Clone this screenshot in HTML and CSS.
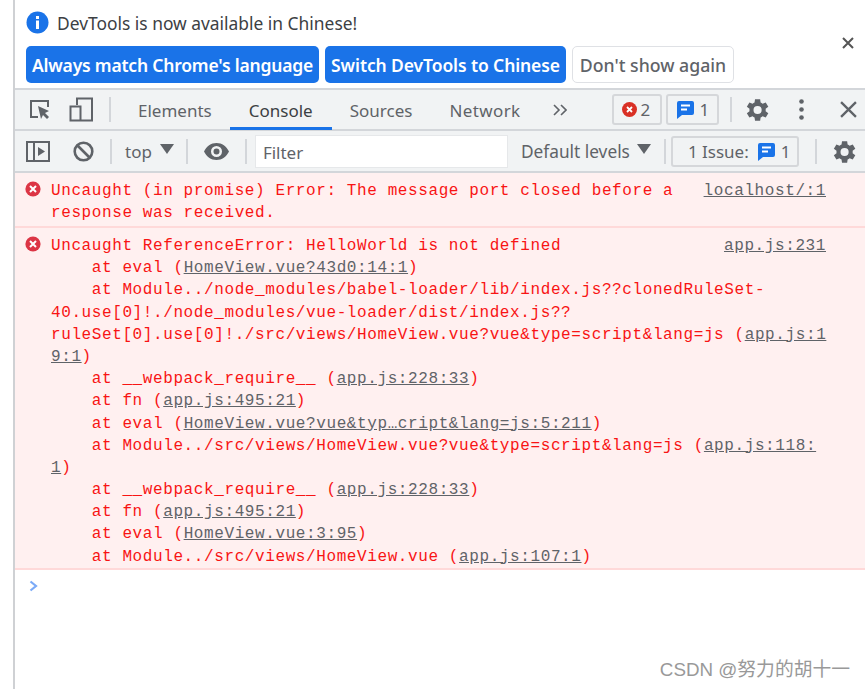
FILE: index.html
```html
<!DOCTYPE html>
<html lang="en">
<head>
<meta charset="utf-8">
<title>DevTools</title>
<link rel="stylesheet" href="styles.css">
</head>
<body>
<div class="devtools">
  <section class="infobar">
    <div class="info-head">
      <svg class="info-icon" width="23" height="23" viewBox="0 0 23 23"><circle cx="11.5" cy="11.5" r="11" fill="#1a73e8"/><rect x="10" y="5" width="3" height="3" fill="#fff"/><rect x="10" y="9.5" width="3" height="8.5" fill="#fff"/></svg>
      <span>DevTools is now available in Chinese!</span>
    </div>
    <div class="info-actions">
      <button class="btn primary wide">Always match Chrome's language</button>
      <button class="btn primary">Switch DevTools to Chinese</button>
      <button class="btn plain">Don't show again</button>
    </div>
    <svg class="info-close" width="12" height="12" viewBox="0 0 12 12"><path d="M1 1l10 10M11 1L1 11" stroke="#555" stroke-width="2"/></svg>
  </section>

  <nav class="tabbar">
    <svg class="ic inspect" width="23" height="23" viewBox="0 0 23 23"><path d="M9 19H2V3h17v6" fill="none" stroke="#5f6368" stroke-width="2"/><path d="M9 8l11 5-4 2 4 4-2 2-4-4-2 4z" fill="#5f6368"/></svg>
    <svg class="ic device" width="24" height="25" viewBox="0 0 24 25"><path d="M8 8V1.500h15v22H1.500V9.500h10v14" fill="none" stroke="#5f6368" stroke-width="2"/></svg>
    <i class="sep first"></i>
    <a class="tab t1">Elements</a>
    <a class="tab active">Console</a>
    <a class="tab t3">Sources</a>
    <a class="tab t4">Network</a>
    <svg class="ic more" width="14" height="12" viewBox="0 0 14 12"><path d="M1 1l5 5-5 5M8 1l5 5-5 5" fill="none" stroke="#5f6368" stroke-width="1.600"/></svg>
    <span class="counter c1">
      <svg width="15" height="15" viewBox="0 0 15 15"><circle cx="7.500" cy="7.500" r="7.500" fill="#d93025"/><path d="M5 5l5 5M10 5l-5 5" stroke="#fff" stroke-width="1.800"/></svg>2
    </span>
    <span class="counter c2">
      <svg width="17" height="18" viewBox="0 0 17 18"><path d="M2 0h13a2 2 0 0 1 2 2v10a2 2 0 0 1-2 2H5l-5 4V2a2 2 0 0 1 2-2z" fill="#1a73e8"/><path d="M4 4.500h9M4 8.500h6" stroke="#fff" stroke-width="1.800"/></svg>1
    </span>
    <i class="sep after-counters"></i>
    <svg class="ic gear g1" width="28" height="28" viewBox="0 0 24 24"><path fill="#5f6368" fill-rule="evenodd" d="M19.400 13a7.600 7.600 0 0 0 0-2l2.300-1.700-2.200-3.800-2.700 1.100a7.500 7.500 0 0 0-1.700-1L14.700 2.700h-4.400L9.900 5.600a7.500 7.500 0 0 0-1.700 1L5.500 5.500 3.300 9.300 5.600 11a7.600 7.600 0 0 0 0 2l-2.300 1.700 2.200 3.800 2.700-1.100c.5.400 1.100.8 1.700 1l.4 2.900h4.400l.4-2.900c.6-.2 1.200-.6 1.700-1l2.700 1.100 2.200-3.800zM12.500 15.500a3.500 3.500 0 1 1 0-7 3.500 3.500 0 0 1 0 7z"/></svg>
    <svg class="ic dots" width="5" height="21" viewBox="0 0 5 21"><circle cx="2.500" cy="2.500" r="2.300" fill="#5f6368"/><circle cx="2.500" cy="10.500" r="2.300" fill="#5f6368"/><circle cx="2.500" cy="18.500" r="2.300" fill="#5f6368"/></svg>
    <svg class="ic x" width="17" height="17" viewBox="0 0 16 16"><path d="M1 1l14 14M15 1L1 15" stroke="#5f6368" stroke-width="2.200"/></svg>
  </nav>

  <div class="toolbar">
    <svg class="ic sidebar" width="24" height="21" viewBox="0 0 24 21"><path d="M1 1h22v19H1zM8 1v19" fill="none" stroke="#5f6368" stroke-width="2"/><path d="M12 6l7 4.500-7 4.500z" fill="#5f6368"/></svg>
    <svg class="ic clear" width="21" height="21" viewBox="0 0 21 21"><circle cx="10.500" cy="10.500" r="8.800" fill="none" stroke="#5f6368" stroke-width="2.600"/><path d="M4.500 4.500l12 12" stroke="#5f6368" stroke-width="2.600"/></svg>
    <i class="sep s2"></i>
    <span class="ctx">top</span><span class="tri t-top"></span>
    <i class="sep s3"></i>
    <svg class="ic eye" width="25" height="17" viewBox="0 0 25 17"><path fill="#5f6368" fill-rule="evenodd" d="M12.500 0C7 0 2.500 3.400 0 8.500 2.500 13.600 7 17 12.500 17S22.500 13.600 25 8.500C22.500 3.400 18 0 12.500 0zm0 14a5.500 5.500 0 1 1 0-11 5.500 5.500 0 0 1 0 11zm0-8.500a3 3 0 1 0 0 6 3 3 0 0 0 0-6z"/></svg>
    <i class="sep s4"></i>
    <div class="filter">Filter</div>
    <span class="levels">Default levels</span><span class="tri t-lv"></span>
    <i class="sep s5"></i>
    <span class="counter issues"><span>1 Issue:</span>
      <svg width="17" height="18" viewBox="0 0 17 18"><path d="M2 0h13a2 2 0 0 1 2 2v10a2 2 0 0 1-2 2H5l-5 4V2a2 2 0 0 1 2-2z" fill="#1a73e8"/><path d="M4 4.500h9M4 8.500h6" stroke="#fff" stroke-width="1.800"/></svg><span>1</span>
    </span>
    <i class="sep s6"></i>
    <svg class="ic gear g2" width="28" height="28" viewBox="0 0 24 24"><path fill="#5f6368" fill-rule="evenodd" d="M19.400 13a7.600 7.600 0 0 0 0-2l2.300-1.700-2.200-3.800-2.700 1.100a7.500 7.500 0 0 0-1.700-1L14.700 2.700h-4.400L9.900 5.600a7.500 7.500 0 0 0-1.700 1L5.500 5.500 3.300 9.300 5.600 11a7.600 7.600 0 0 0 0 2l-2.300 1.700 2.200 3.800 2.700-1.100c.5.400 1.100.8 1.700 1l.4 2.900h4.400l.4-2.900c.6-.2 1.200-.6 1.700-1l2.700 1.100 2.200-3.800zM12.500 15.500a3.500 3.500 0 1 1 0-7 3.500 3.500 0 0 1 0 7z"/></svg>
  </div>

  <main class="console">
    <article class="msg m1">
      <svg class="err" width="16" height="16" viewBox="0 0 16 16"><circle cx="8" cy="8" r="7.600" fill="#dc3545"/><path d="M5 5l6 6M11 5l-6 6" stroke="#fff" stroke-width="2"/></svg>
      <div class="text">
        <div class="line head"><span>Uncaught (in promise) Error: The message port closed before a</span><a class="src">localhost/:1</a></div>
        <div class="line">response was received.</div>
      </div>
    </article>
    <article class="msg m2">
      <svg class="err" width="16" height="16" viewBox="0 0 16 16"><circle cx="8" cy="8" r="7.600" fill="#dc3545"/><path d="M5 5l6 6M11 5l-6 6" stroke="#fff" stroke-width="2"/></svg>
      <div class="text">
        <div class="line head"><span>Uncaught ReferenceError: HelloWorld is not defined</span><a class="src">app.js:231</a></div>
        <div class="line">    at eval (<a>HomeView.vue?43d0:14:1</a>)</div>
        <div class="line">    at Module../node_modules/babel-loader/lib/index.js??clonedRuleSet-</div>
        <div class="line">40.use[0]!./node_modules/vue-loader/dist/index.js??</div>
        <div class="line">ruleSet[0].use[0]!./src/views/HomeView.vue?vue&amp;type=script&amp;lang=js (<a>app.js:1</a></div>
        <div class="line"><a>9:1</a>)</div>
        <div class="line">    at __webpack_require__ (<a>app.js:228:33</a>)</div>
        <div class="line">    at fn (<a>app.js:495:21</a>)</div>
        <div class="line">    at eval (<a>HomeView.vue?vue&amp;typ…cript&amp;lang=js:5:211</a>)</div>
        <div class="line">    at Module../src/views/HomeView.vue?vue&amp;type=script&amp;lang=js (<a>app.js:118:</a></div>
        <div class="line"><a>1</a>)</div>
        <div class="line">    at __webpack_require__ (<a>app.js:228:33</a>)</div>
        <div class="line">    at fn (<a>app.js:495:21</a>)</div>
        <div class="line">    at eval (<a>HomeView.vue:3:95</a>)</div>
        <div class="line">    at Module../src/views/HomeView.vue (<a>app.js:107:1</a>)</div>
      </div>
    </article>
    <div class="prompt"><svg width="9" height="12" viewBox="0 0 9 12"><path d="M1.500 1.500L7 6l-5.500 4.500" fill="none" stroke="#7baaf7" stroke-width="2.200"/></svg></div>
    <div class="watermark">CSDN @努力的胡十一</div>
  </main>
</div>
</body>
</html>
```

FILE: styles.css
```css
* { box-sizing: border-box; }
html, body { margin: 0; height: 100%; background: #fff; overflow: hidden; }
body { padding-left: 13px; font-family: "Noto Sans", "Open Sans", sans-serif; color: #5f6368; }
.devtools { height: 689px; border-left: 2px solid #cfd1d4; display: flex; flex-direction: column; }

.infobar { position: relative; height: 88px; padding: 9px 0 0 11px; background: #fff; flex: none; }
.info-head { display: flex; align-items: center; gap: 8px; font-size: 17.400px; color: #3c4043; height: 27px; }
.info-actions { display: flex; gap: 6px; margin-top: 10px; }
.btn { height: 37px; border-radius: 5px; font: 600 17.500px "Noto Sans", sans-serif; padding: 1px 0 0; white-space: nowrap; }
.primary { background: #1a73e8; color: #fff; border: 0; width: 241px; letter-spacing: -.1px; }
.primary.wide { width: 293px; letter-spacing: -.2px; }
.plain { background: #fff; color: #5f6368; border: 1px solid #dfe1e5; width: 162px; font-weight: 500; font-size: 17.700px; }
.info-close { position: absolute; right: 11px; top: 37px; }

.tabbar, .toolbar { display: flex; align-items: center; background: #f1f3f4; flex: none; position: relative; }
.tabbar { height: 43px; border-top: 2px solid #d3d6da; border-bottom: 2px solid #d3d6da; }
.toolbar { height: 42px; padding-top: 1px; border-bottom: 2px solid #d3d6da; }
.ic { flex: none; }
.sep { flex: none; width: 2px; height: 25px; background: #d3d6da; display: block; }

.inspect { margin-left: 14px; }
.device { margin-left: 17px; }
.sep.first { margin-left: 16px; }
.tab { font-size: 17px; height: 41px; line-height: 39px; padding: 2px 17px 0; color: #5f6368; flex: none; }
.t1 { margin-left: 10px; padding-right: 18px; }
.tab.active { color: #3c4043; border-bottom: 3px solid #1a73e8; width: 102px; text-align: center; padding: 2px 0 0; }
.t3 { padding-left: 18px; }
.t4 { padding-left: 20px; letter-spacing: .4px; }
.more { margin-left: 15px; }
.counter { display: flex; align-items: center; gap: 4px; height: 31px; border: 2px solid #d5d7da; border-radius: 3px; font-size: 17px; flex: none; }
.c1 { width: 50px; padding-left: 8px; margin-left: 45px; }
.c2 { width: 53px; padding-left: 9px; margin-left: 4px; gap: 6px; }
.sep.after-counters { margin-left: 11px; }
.g1 { margin-left: 11px; }
.dots { margin-left: 28px; }
.x { margin-left: 36px; }

.sidebar { margin-left: 11px; }
.clear { margin-left: 23px; }
.s2 { margin-left: 16px; }
.ctx { font-size: 17px; margin-left: 13px; }
.tri { flex: none; width: 0; height: 0; border: 7px solid transparent; border-top: 10px solid #5f6368; border-bottom: 0; }
.t-top { margin-left: 8px; margin-top: -5px; }
.s3 { margin-left: 12px; }
.eye { margin-left: 16px; }
.s4 { margin-left: 16px; }
.filter { margin-left: 8px; width: 253px; height: 33px; background: #fff; border: 1px solid #e6e8ea; padding-left: 7px; font-size: 17px; line-height: 33px; flex: none; }
.levels { font-size: 17.300px; margin-left: 13px; }
.t-lv { margin-left: 7px; margin-top: -5px; }
.s5 { margin-left: 13px; }
.issues { width: 128px; padding-left: 15px; margin-left: 5px; gap: 0; }
.issues svg { margin: 0 6px 0 9px; }
.s6 { margin-left: 16px; }
.g2 { margin-left: 13px; }

.console { flex: 1; position: relative; min-height: 0; }
.msg { display: flex; background: #fff0f0; border-bottom: 2px solid #ffd9d9; padding: 7px 0 0 10px; }
.m1 { height: 55px; }
.m2 { height: 342px; }
.err { flex: none; margin-top: 1px; }
.text { flex: 1; margin-left: 10px; font: 16px/22.200px "Liberation Mono", monospace; letter-spacing: .6px; color: #f81414; }
.line { white-space: pre; height: 22.200px; }
.line.head { display: flex; justify-content: space-between; padding-right: 39px; }
.line a { color: #5f6368; text-decoration: underline; }
.prompt { padding: 10px 0 0 14px; }
.prompt svg { display: block; }
.watermark { position: absolute; right: 15px; bottom: 8px; font: 18.800px "Liberation Sans", "Noto Sans CJK SC", sans-serif; color: #999; }
```
